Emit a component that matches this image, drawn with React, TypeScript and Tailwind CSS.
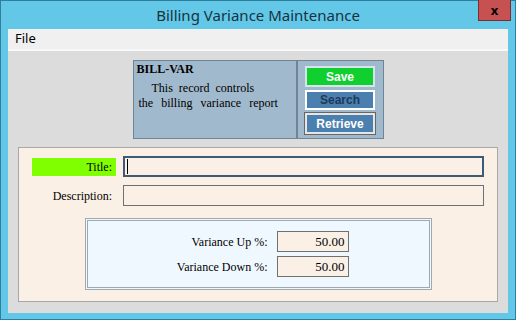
export default function App() {
  return (
    <div className="flex h-[320px] w-[516px] flex-col border border-[#2f7f9c] bg-[#63c8e8] font-['Noto_Sans',sans-serif]">
      <div className="relative flex h-[28px] shrink-0 items-center justify-center">
        <span className="text-[15px] text-[#17323f]">Billing Variance Maintenance</span>
        <div className="absolute right-[4px] top-[-1px] flex h-[21px] w-[33px] items-center justify-center border border-[#7a3030] border-t-0 bg-[#c75050] text-[13px] font-bold leading-none text-black">
          x
        </div>
      </div>
      <div className="mx-[7px] mb-[7px] flex flex-1 flex-col bg-[#dcdcdc]">
        <div className="flex h-[22px] items-center border-b-2 border-[#f8f8f8] bg-[#f0f0f0] px-[7px] text-[13px] text-black">File</div>
        <div className="flex flex-1 flex-col px-[10px] pb-[11px] pt-[9px]">
          <div className="mx-auto flex h-[79px] w-[251px] border border-[#6f8596] bg-[#a1b9cc]">
            <div className="flex w-[164px] flex-col border-r-2 border-[#6f8596] px-[3px] pt-[1px] font-['Liberation_Serif',serif] text-[12px] text-black">
              <div className="font-bold leading-[15px]">BILL-VAR</div>
              <div className="mt-[4px] pl-[15px] leading-[15px] [word-spacing:3px]">This record controls</div>
              <div className="pl-[2px] leading-[15px] [word-spacing:5px]">the billing variance report</div>
            </div>
            <div className="flex flex-1 flex-col items-center gap-[3px] pt-[5px] font-['Liberation_Sans',sans-serif] text-[12px] font-bold">
              <div className="flex h-[21px] w-[70px] items-center justify-center border-2 border-[#d8e4ec] bg-[#10d030] text-white">Save</div>
              <div className="flex h-[20px] w-[70px] items-center justify-center border-2 border-white bg-[#4a7fb0] text-[#1c3a58]">Search</div>
              <div className="flex h-[21px] w-[70px] items-center justify-center border-2 border-[#e6e6e6] bg-[#4a7fb0] text-white outline outline-1 outline-[#666]">Retrieve</div>
            </div>
          </div>
          <div className="mt-[8px] flex flex-1 flex-col border border-[#a8a8a8] bg-[#faf0e6] px-[13px] pb-[11px] pt-[8px] font-['Liberation_Serif',serif] text-[12px] text-black">
            <div className="flex items-center gap-[7px]">
              <div className="flex h-[18px] w-[84px] items-center justify-end bg-[#80ff00] pr-[4px]">Title:</div>
              <div className="flex h-[21px] flex-1 items-center border-2 border-[#3f5a74] bg-[#faf0e6] pl-[2px]">
                <div className="h-[15px] w-px bg-black" />
              </div>
            </div>
            <div className="mt-[8px] flex items-center gap-[7px]">
              <div className="flex h-[18px] w-[84px] items-center justify-end pr-[4px]">Description:</div>
              <div className="h-[21px] flex-1 border border-[#707070] bg-[#faf0e6]" />
            </div>
            <div className="mx-auto mt-[12px] w-[347px] border-[3px] border-double border-[#a0a8b0] bg-[#f0f8ff] py-[10px]">
              <div className="flex items-center">
                <div className="w-[180px] text-right">Variance Up %:</div>
                <div className="ml-[9px] flex h-[21px] w-[72px] items-center justify-end border border-[#707070] bg-[#faf0e6] pr-[3px] text-[13px]">50.00</div>
              </div>
              <div className="mt-[4px] flex items-center">
                <div className="w-[180px] text-right">Variance Down %:</div>
                <div className="ml-[9px] flex h-[21px] w-[72px] items-center justify-end border border-[#707070] bg-[#faf0e6] pr-[3px] text-[13px]">50.00</div>
              </div>
            </div>
          </div>
        </div>
      </div>
    </div>
  )
}
